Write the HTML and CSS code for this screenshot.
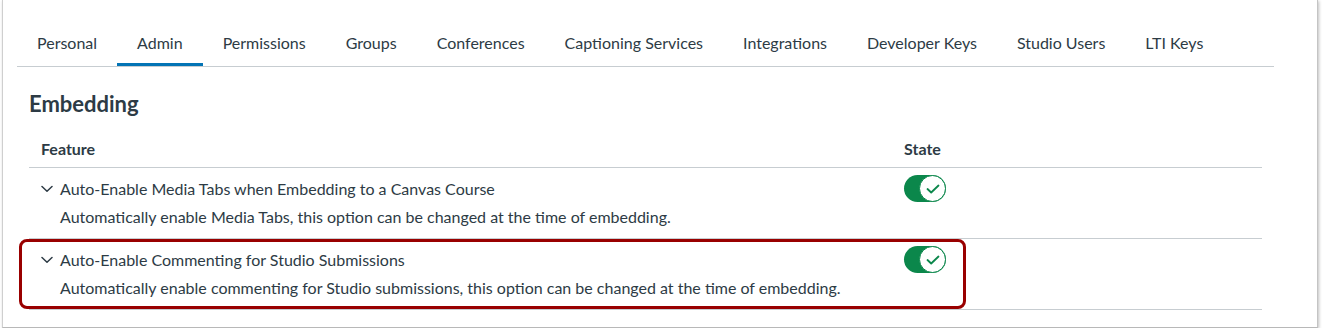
FILE: index.html
```html
<!DOCTYPE html>
<html lang="en">
<head>
<meta charset="utf-8">
<title>Embedding</title>
<link rel="stylesheet" href="styles.css">
</head>
<body>
<div class="frame">
  <nav class="tabs">
    <div class="tab">Personal</div>
    <div class="tab active">Admin</div>
    <div class="tab">Permissions</div>
    <div class="tab">Groups</div>
    <div class="tab">Conferences</div>
    <div class="tab">Captioning Services</div>
    <div class="tab">Integrations</div>
    <div class="tab">Developer Keys</div>
    <div class="tab">Studio Users</div>
    <div class="tab">LTI Keys</div>
  </nav>
  <section class="section">
    <h2 class="heading">Embedding</h2>
    <div class="table">
      <div class="row head">
        <div class="cell feat">Feature</div>
        <div class="cell state">State</div>
      </div>
      <div class="row">
        <div class="cell feat">
          <div class="title-line">
            <svg class="chev" viewBox="0 0 12 8" width="12" height="8"><path d="M1 1.5 L6 6.2 L11 1.5" fill="none" stroke="#2D3B45" stroke-width="1.5" stroke-linecap="round" stroke-linejoin="round"/></svg>
            <span>Auto-Enable Media Tabs when Embedding to a Canvas Course</span>
          </div>
          <div class="desc">Automatically enable Media Tabs, this option can be changed at the time of embedding.</div>
        </div>
        <div class="cell state">
          <div class="toggle"><span class="knob"><svg viewBox="0 0 14 10" width="14" height="10"><path d="M1.5 5 L5.2 8.5 L12.5 1.5" fill="none" stroke="#0B874B" stroke-width="1.8" stroke-linecap="round" stroke-linejoin="round"/></svg></span></div>
        </div>
      </div>
      <div class="row">
        <div class="cell feat">
          <div class="title-line">
            <svg class="chev" viewBox="0 0 12 8" width="12" height="8"><path d="M1 1.5 L6 6.2 L11 1.5" fill="none" stroke="#2D3B45" stroke-width="1.5" stroke-linecap="round" stroke-linejoin="round"/></svg>
            <span>Auto-Enable Commenting for Studio Submissions</span>
          </div>
          <div class="desc">Automatically enable commenting for Studio submissions, this option can be changed at the time of embedding.</div>
        </div>
        <div class="cell state">
          <div class="toggle"><span class="knob"><svg viewBox="0 0 14 10" width="14" height="10"><path d="M1.5 5 L5.2 8.5 L12.5 1.5" fill="none" stroke="#0B874B" stroke-width="1.8" stroke-linecap="round" stroke-linejoin="round"/></svg></span></div>
        </div>
      </div>
    </div>
  </section>
  <div class="highlight"></div>
</div>
</body>
</html>
```
FILE: styles.css
```css
* { box-sizing: border-box; }
html, body { margin: 0; padding: 0; background: #fff; }
body {
  font-family: "Lato", "Noto Sans", sans-serif;
  color: #2D3B45;
  font-size: 16px;
  line-height: 24px;
}
.frame {
  position: relative;
  margin-left: 2px;
  width: 1316px;
  height: 328px;
  border-left: 1px solid #cfcfcf;
  border-right: 1px solid #c4c4c4;
  border-bottom: 1px solid #b8b8b8;
  box-shadow: 1px 1px 3px rgba(0,0,0,0.25);
  padding: 20px 0 0 14px;
}
.tabs {
  display: flex;
  width: 1257px;
  border-bottom: 1px solid #C7CDD1;
}
.tab {
  padding: 11px 20px 8px;
  border-bottom: 3px solid transparent;
  white-space: nowrap;
}
.tab.active { border-bottom-color: #0374B5; }
.section {
  margin-left: 12px;
  width: 1233px;
}
.heading {
  margin: 23px 0 0;
  font-size: 22px;
  line-height: 28px;
  font-weight: 700;
}
.table { margin-top: 11px; }
.row {
  display: grid;
  grid-template-columns: 863px 370px;
  border-bottom: 1px solid #C7CDD1;
  padding: 7px 0 9px;
}
.row.head {
  padding: 8px 0 6px;
  font-weight: 700;
}
.cell { padding-left: 12px; }
.title-line {
  display: flex;
  align-items: center;
  height: 27px;
}
.chev { margin-right: 7px; flex: none; }
.desc {
  margin-top: 3px;
  padding-left: 19px;
}
.toggle {
  position: relative;
  width: 42px;
  height: 27px;
  border-radius: 14px;
  background: #0B874B;
}
.knob {
  position: absolute;
  right: 0;
  top: 0;
  width: 27px;
  height: 27px;
  border-radius: 50%;
  background: #fff;
  border: 1px solid #0B874B;
  display: flex;
  align-items: center;
  justify-content: center;
}
.highlight {
  position: absolute;
  left: 16px;
  top: 239px;
  width: 947px;
  height: 70px;
  border: 3px solid #990000;
  border-radius: 8px;
  pointer-events: none;
}
```
